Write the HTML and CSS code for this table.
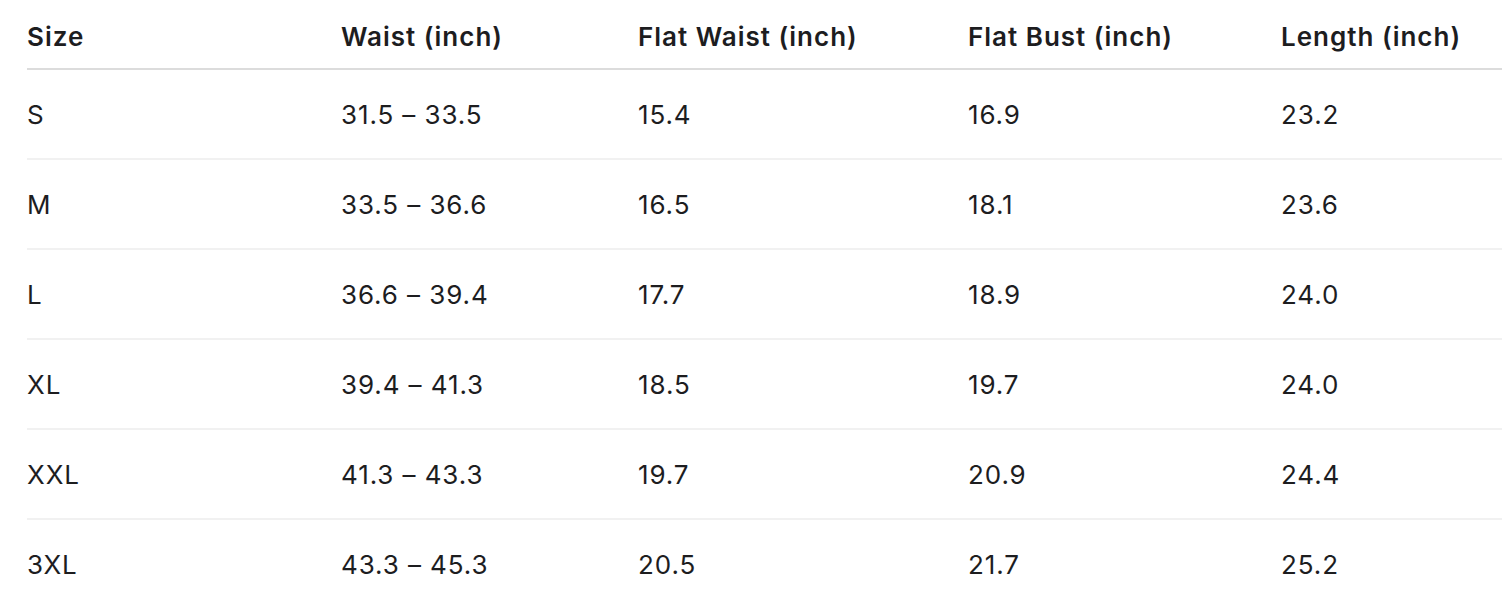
FILE: index.html
```html
<!DOCTYPE html>
<html lang="en">
<head>
<meta charset="utf-8">
<title>Size Chart</title>
<link rel="stylesheet" href="styles.css">
</head>
<body>
<table class="size-table">
  <colgroup>
    <col class="c1"><col class="c2"><col class="c3"><col class="c4"><col class="c5">
  </colgroup>
  <thead>
    <tr><th>Size</th><th>Waist (inch)</th><th>Flat Waist (inch)</th><th>Flat Bust (inch)</th><th>Length (inch)</th></tr>
  </thead>
  <tbody>
    <tr><td>S</td><td>31.5 – 33.5</td><td>15.4</td><td>16.9</td><td>23.2</td></tr>
    <tr><td>M</td><td>33.5 – 36.6</td><td>16.5</td><td>18.1</td><td>23.6</td></tr>
    <tr><td>L</td><td>36.6 – 39.4</td><td>17.7</td><td>18.9</td><td>24.0</td></tr>
    <tr><td>XL</td><td>39.4 – 41.3</td><td>18.5</td><td>19.7</td><td>24.0</td></tr>
    <tr><td>XXL</td><td>41.3 – 43.3</td><td>19.7</td><td>20.9</td><td>24.4</td></tr>
    <tr><td>3XL</td><td>43.3 – 45.3</td><td>20.5</td><td>21.7</td><td>25.2</td></tr>
  </tbody>
</table>
</body>
</html>
```
FILE: styles.css
```css
html, body {
  margin: 0;
  padding: 0;
  background: #ffffff;
}
body {
  font-family: Inter, "Noto Sans", "Liberation Sans", sans-serif;
  color: #1d1d1f;
  overflow: hidden;
}
.size-table {
  margin-left: 27px;
  width: 1475px;
  border-collapse: collapse;
  table-layout: fixed;
  font-size: 26px;
}
.c1 { width: 314px; }
.c2 { width: 297px; }
.c3 { width: 330px; }
.c4 { width: 313px; }
.c5 { width: 221px; }
.size-table th {
  text-align: left;
  font-weight: 600;
  letter-spacing: 1px;
  line-height: 30px;
  padding: 22px 0 16px 0;
  border-bottom: 2px solid #dcdcdc;
  white-space: nowrap;
}
.size-table td {
  line-height: 30px;
  height: 30px;
  padding: 30px 0 28px 0;
  border-bottom: 2px solid #f1f1f1;
  white-space: nowrap;
  font-weight: 400;
  letter-spacing: 0.9px;
}
.size-table tbody tr:last-child td {
  border-bottom: none;
}
```
